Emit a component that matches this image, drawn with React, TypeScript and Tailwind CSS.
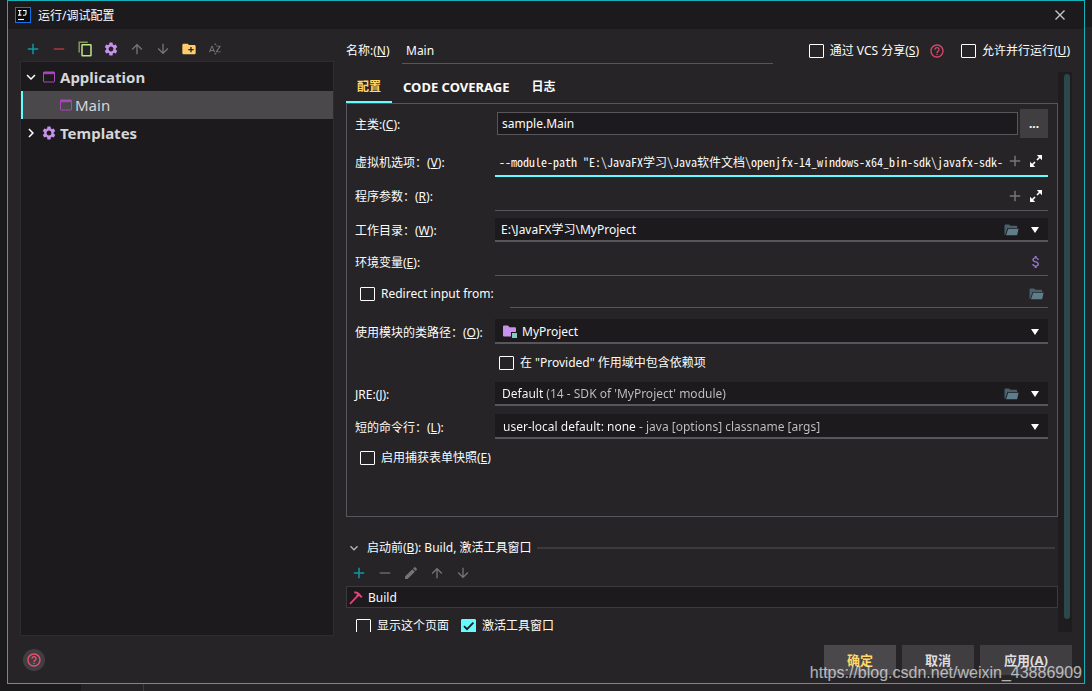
import { useState } from 'react';
import type { ReactNode } from 'react';
import {
  MdAdd,
  MdArrowDownward,
  MdArrowUpward,
  MdAttachMoney,
  MdCreateNewFolder,
  MdEdit,
  MdExpandMore,
  MdHelpOutline,
  MdRemove,
  MdSettings,
  MdSortByAlpha,
} from 'react-icons/md';

function IdeaLogo() {
  return (
    <svg viewBox="0 0 16 16" className="size-4 shrink-0">
      <rect x="0.5" y="0.5" width="15" height="15" fill="#0b0b0d" stroke="#1273eb" />
      <path d="M3 3.5h3.4M4.7 3.5v4.6M3 8.1h3.4M8 3.5h3v3.3q0 1.4-1.5 1.4H8" fill="none" stroke="#fff" strokeWidth="1.1" />
      <path d="M3 12.5h6" stroke="#fff" strokeWidth="1.1" />
    </svg>
  );
}

function CopyIcon() {
  return (
    <svg viewBox="0 0 14 16" className="h-4 w-3.5" fill="none">
      <path d="M1.2 11.5V1.2h8.6" stroke="#7d9a59" strokeWidth="1.5" />
      <rect x="4" y="3.8" width="9" height="11" rx="0.5" stroke="#bfe584" strokeWidth="1.5" />
    </svg>
  );
}

function WindowIcon() {
  return (
    <svg viewBox="0 0 12 12" className="size-3 shrink-0" fill="none">
      <rect x="0.5" y="1" width="11" height="10" rx="0.5" stroke="#ab47bc" />
      <path d="M0.5 1.5h11v1.2h-11z" fill="#ab47bc" stroke="#ab47bc" />
    </svg>
  );
}

function OpenFolderIcon() {
  return (
    <svg viewBox="0 0 15 12" className="h-3 w-[15px]">
      <path d="M0.5 1.5Q0.5 0.5 1.5 0.5H5l1.5 1.3h5.8q.9 0 .9 1V4H3.6L1 11.2q-.5-.2-.5-.9z" fill="#46606c" />
      <path d="M4.2 4.8h10.4l-1.3 5.6q-.2.9-1.1.9H2z" fill="#607d8b" />
    </svg>
  );
}

function ModuleIcon() {
  return (
    <svg viewBox="0 0 14 13" className="h-[13px] w-3.5">
      <path d="M0 1.5Q0 .5 1 .5h4l1.5 1.7H12q1 0 1 1V7H8v4.5H1q-1 0-1-1z" fill="#c792ea" />
      <path d="M9 8h5v5H9z" fill="#80cbc4" />
    </svg>
  );
}

function HammerIcon() {
  return (
    <svg viewBox="0 0 14 14" className="size-3.5" fill="none" stroke="#ec407a">
      <path d="M1 12.8 8.4 5.2" strokeWidth="1.7" />
      <path d="M5.3 1.6Q8 1 9.6 2.8l3.2 3.6" strokeWidth="2" />
      <path d="M8 5.4 9.8 3.4" strokeWidth="2.4" />
    </svg>
  );
}

function ExpandIcon() {
  return (
    <svg viewBox="0 0 12 12" className="size-3" fill="none" stroke="#fff" strokeWidth="1.6">
      <path d="M7 5l3.2-3.2M5 7l-3.2 3.2" />
      <path d="M6.8 0H12v5.2zM0 6.8V12h5.2z" fill="#fff" stroke="none" />
    </svg>
  );
}

function DropArrow() {
  return (
    <svg viewBox="0 0 8 6" className="h-1.5 w-2">
      <path d="M0 0h8L4 6z" fill="#fff" />
    </svg>
  );
}

function ToolButton({ label, children }: { label: string; children: ReactNode }) {
  return (
    <button type="button" aria-label={label} className="grid h-6 w-[26px] place-items-center">
      {children}
    </button>
  );
}

function CheckBox({ children, defaultChecked = false }: { children: ReactNode; defaultChecked?: boolean }) {
  return (
    <label className="flex h-5 shrink-0 items-center gap-1.5 whitespace-nowrap">
      <span className="grid">
        <input
          type="checkbox"
          defaultChecked={defaultChecked}
          className="peer col-start-1 row-start-1 h-3.5 w-[15px] appearance-none rounded-[1px] border border-white checked:border-[#64fcff] checked:bg-[#64fcff]"
        />
        <svg
          viewBox="0 0 15 14"
          className="pointer-events-none col-start-1 row-start-1 hidden h-3.5 w-[15px] peer-checked:block"
          fill="none"
          stroke="#1c1a1d"
          strokeWidth="1.8"
        >
          <path d="M3 7.2 6 10.2 12.4 3.6" />
        </svg>
      </span>
      <span>{children}</span>
    </label>
  );
}

function FieldLabel({ htmlFor, children }: { htmlFor: string; children: ReactNode }) {
  return (
    <label htmlFor={htmlFor} className="flex h-full w-[140px] shrink-0 items-center pt-0.5 whitespace-nowrap">
      {children}
    </label>
  );
}

const tabs = [
  { name: '配置', size: 'text-[12px]' },
  { name: 'CODE COVERAGE', size: 'text-[13px]' },
  { name: '日志', size: 'text-[12px]' },
];

function RunTree() {
  return (
    <aside className="flex w-[314px] shrink-0 flex-col pt-2">
      <div className="flex">
        <ToolButton label="Add"><MdAdd className="size-[18px] text-[#0f97a5]" /></ToolButton>
        <ToolButton label="Remove"><MdRemove className="size-[18px] text-[#a8393f]" /></ToolButton>
        <ToolButton label="Copy"><CopyIcon /></ToolButton>
        <ToolButton label="Edit templates"><MdSettings className="size-4 text-[#c792ea]" /></ToolButton>
        <ToolButton label="Move up"><MdArrowUpward className="size-4 text-[#757477]" /></ToolButton>
        <ToolButton label="Move down"><MdArrowDownward className="size-4 text-[#757477]" /></ToolButton>
        <ToolButton label="New folder"><MdCreateNewFolder className="size-4 text-[#ffcb6b]" /></ToolButton>
        <ToolButton label="Sort"><MdSortByAlpha className="size-3.5 text-[#757477]" /></ToolButton>
      </div>
      <ul className="flex-1 border border-[#2e2c2f] bg-[#1c1a1d] pt-px text-[15px] text-[#d6d5d7]">
        <li className="flex h-7 items-center pl-px font-bold">
          <MdExpandMore className="size-[18px] text-white" />
          <span className="ml-[3px] flex items-center gap-[5px]"><WindowIcon />Application</span>
        </li>
        <li className="flex h-7 items-center gap-[3px] border-l-2 border-[#64fcff] bg-[#4a484b] pl-[37px]">
          <WindowIcon />
          Main
        </li>
        <li className="flex h-7 items-center pl-px font-bold">
          <MdExpandMore className="size-[18px] -rotate-90 text-white" />
          <span className="ml-px flex items-center gap-[3px]"><MdSettings className="size-4 text-[#c792ea]" />Templates</span>
        </li>
      </ul>
    </aside>
  );
}

function ConfigurationPanel() {
  return (
    <div className="flex flex-col border border-[#58565a] pt-[5px] pr-[9px] pb-12 pl-2">
      <div className="flex h-[29px] items-center">
        <FieldLabel htmlFor="main-class">主类:(<u>C</u>):</FieldLabel>
        <input
          id="main-class"
          defaultValue="sample.Main"
          className="mx-0.5 h-[23px] min-w-0 flex-1 border border-[#58565a] bg-[#1c1a1d] px-1 outline-none"
        />
        <button type="button" className="h-[29px] w-7 bg-[#403e41] font-bold">...</button>
      </div>

      <div className="mt-[9px] flex h-[30px]">
        <FieldLabel htmlFor="vm-options">虚拟机选项：(<u>V</u>):</FieldLabel>
        <div className="flex min-w-0 flex-1 items-center border-b-2 border-[#64fcff] pr-1.5">
          <input
            id="vm-options"
            defaultValue={'--module-path "E:\\JavaFX学习\\Java软件文档\\openjfx-14_windows-x64_bin-sdk\\javafx-sdk-'}
            className="min-w-0 flex-1 pt-px pl-1 font-['Noto_Sans_Mono_CJK_SC','Liberation_Mono','Noto_Sans_CJK_SC',monospace] outline-none"
          />
          <button type="button" aria-label="Insert macro"><MdAdd className="size-[18px] text-[#757477]" /></button>
          <button type="button" aria-label="Expand" className="ml-1.5"><ExpandIcon /></button>
        </div>
      </div>

      <div className="mt-1 flex h-[30px]">
        <FieldLabel htmlFor="arguments">程序参数：(<u>R</u>):</FieldLabel>
        <div className="flex min-w-0 flex-1 items-center border-b border-[#58565a] pr-1.5">
          <input id="arguments" className="min-w-0 flex-1 px-1 outline-none" />
          <button type="button" aria-label="Insert macro"><MdAdd className="size-[18px] text-[#757477]" /></button>
          <button type="button" aria-label="Expand" className="ml-1.5"><ExpandIcon /></button>
        </div>
      </div>

      <div className="mt-[7px] flex h-6 items-center">
        <FieldLabel htmlFor="work-dir">工作目录：(<u>W</u>):</FieldLabel>
        <div className="flex h-full min-w-0 flex-1 items-center border-b-2 border-[#58565a] bg-[#1c1a1d] pt-px pr-[9px]">
          <input id="work-dir" defaultValue="E:\JavaFX学习\MyProject" className="min-w-0 flex-1 px-1.5 outline-none" />
          <button type="button" aria-label="Browse"><OpenFolderIcon /></button>
          <button type="button" aria-label="History" className="ml-3"><DropArrow /></button>
        </div>
      </div>

      <div className="mt-1.5 flex h-7">
        <FieldLabel htmlFor="env">环境变量(<u>E</u>):</FieldLabel>
        <div className="flex min-w-0 flex-1 items-center border-b border-[#58565a] pr-1">
          <input id="env" className="min-w-0 flex-1 px-1 outline-none" />
          <button type="button" aria-label="Edit variables"><MdAttachMoney className="size-4 text-[#9575cd]" /></button>
        </div>
      </div>

      <div className="mt-1 flex h-7 items-center pl-[5px]">
        <CheckBox>Redirect input from:</CheckBox>
        <div className="ml-4 flex h-full min-w-0 flex-1 items-center border-b border-[#58565a] pr-1">
          <input aria-label="Redirect input from" className="min-w-0 flex-1 px-1 outline-none" />
          <button type="button" aria-label="Browse"><OpenFolderIcon /></button>
        </div>
      </div>

      <div className="mt-[11px] flex h-[25px] items-center">
        <FieldLabel htmlFor="module">使用模块的类路径：(<u>O</u>):</FieldLabel>
        <div className="flex h-full min-w-0 flex-1 items-center border-b-2 border-[#58565a] bg-[#1c1a1d] pt-0.5 pr-[9px] pl-2">
          <ModuleIcon />
          <select id="module" className="min-w-0 flex-1 appearance-none bg-transparent pl-[5px] outline-none">
            <option>MyProject</option>
          </select>
          <DropArrow />
        </div>
      </div>

      <div className="mt-[9px] pl-36">
        <CheckBox>在 "Provided" 作用域中包含依赖项</CheckBox>
      </div>

      <div className="mt-[9px] flex h-6 items-center">
        <FieldLabel htmlFor="jre">JRE:(<u>J</u>):</FieldLabel>
        <div className="flex h-full min-w-0 flex-1 items-center border-b-2 border-[#58565a] bg-[#1c1a1d] pt-0.5 pr-[9px]">
          <select
            id="jre"
            className="min-w-0 flex-1 appearance-none bg-linear-to-r from-white from-[50px] to-[#c3c2c4] to-[50px] bg-clip-text pl-[7px] text-transparent outline-none"
          >
            <option>Default (14 - SDK of 'MyProject' module)</option>
          </select>
          <button type="button" aria-label="Browse"><OpenFolderIcon /></button>
          <span className="ml-3"><DropArrow /></span>
        </div>
      </div>

      <div className="mt-2 flex h-[25px] items-center">
        <FieldLabel htmlFor="short-cmd">短的命令行：(<u>L</u>):</FieldLabel>
        <div className="flex h-full min-w-0 flex-1 items-center border-b-2 border-[#58565a] bg-[#1c1a1d] pt-0.5 pr-[9px]">
          <select
            id="short-cmd"
            className="min-w-0 flex-1 appearance-none bg-linear-to-r from-white from-[142px] to-[#c3c2c4] to-[142px] bg-clip-text pl-2 text-transparent outline-none"
          >
            <option>user-local default: none - java [options] classname [args]</option>
          </select>
          <DropArrow />
        </div>
      </div>

      <div className="mt-[9px] pl-[5px]">
        <CheckBox>启用捕获表单快照(<u>E</u>)</CheckBox>
      </div>
    </div>
  );
}

function BeforeLaunch() {
  return (
    <section>
      <h2 className="mt-[21px] flex h-5 items-center pr-[3px]">
        <MdExpandMore className="size-4 text-[#b5b4b6]" />
        <span className="ml-[5px]">启动前(<u>B</u>): Build, 激活工具窗口</span>
        <span className="ml-1.5 h-0.5 flex-1 bg-[#3c3a3d]" />
      </h2>
      <div className="mt-[3px] flex">
        <ToolButton label="Add task"><MdAdd className="size-[18px] text-[#0f97a5]" /></ToolButton>
        <ToolButton label="Remove task"><MdRemove className="size-[18px] text-[#67666a]" /></ToolButton>
        <ToolButton label="Edit task"><MdEdit className="size-4 text-[#757477]" /></ToolButton>
        <ToolButton label="Move task up"><MdArrowUpward className="size-4 text-[#757477]" /></ToolButton>
        <ToolButton label="Move task down"><MdArrowDownward className="size-4 text-[#757477]" /></ToolButton>
      </div>
      <ul className="mt-px border border-[#3c3a3d] bg-[#1c1a1d]">
        <li className="flex h-5 items-center gap-[5px] pt-px pl-0.5"><HammerIcon />Build</li>
      </ul>
      <div className="mt-2 flex gap-3 pl-2.5">
        <CheckBox>显示这个页面</CheckBox>
        <CheckBox defaultChecked>激活工具窗口</CheckBox>
      </div>
    </section>
  );
}

export default function App() {
  const [activeTab, setActiveTab] = useState('配置');

  return (
    <main className="relative flex h-screen flex-col overflow-hidden bg-[#1a191b] font-['Noto_Sans','Noto_Sans_CJK_SC',sans-serif] text-[12px] leading-4 text-[#fcfcfa]">
      <div className="flex min-h-0 flex-1">
        <div className="w-[7px] shrink-0" />
        <div className="flex min-w-0 flex-1 flex-col border border-[#15b0ba] bg-[#262427]">
          <header className="flex h-7 shrink-0 items-center bg-[#1c1a1d] pl-[7px]">
            <IdeaLogo />
            <h1 className="ml-[7px] flex-1 pt-px">运行/调试配置</h1>
            <button type="button" aria-label="Close" className="mr-[18px]">
              <svg viewBox="0 0 12 12" className="size-3" fill="none" stroke="#c5c8ca" strokeWidth="1.4">
                <path d="M1.5 1.5l9 9M10.5 1.5l-9 9" />
              </svg>
            </button>
          </header>

          <div className="flex min-h-0 flex-1 pl-3">
            <RunTree />
            <div className="mr-3 ml-3 flex min-w-0 flex-1 flex-col">
              <div className="flex h-[43px] shrink-0 items-center">
                <label htmlFor="name" className="w-14 shrink-0">名称:(<u>N</u>)</label>
                <input
                  id="name"
                  defaultValue="Main"
                  className="mb-0.5 h-7 min-w-0 flex-1 border-b border-[#58565a] px-1 pt-0.5 outline-none"
                />
                <div className="mr-0.5 ml-9 flex items-center">
                  <CheckBox>通过 VCS 分享(<u>S</u>)</CheckBox>
                  <button type="button" aria-label="Help on sharing" className="mx-2.5">
                    <MdHelpOutline className="size-4 text-[#d9486a]" />
                  </button>
                  <span className="ml-1.5"><CheckBox>允许并行运行(<u>U</u>)</CheckBox></span>
                </div>
              </div>

              <div className="mb-1 flex min-h-0 flex-1 overflow-hidden">
                <div className="min-w-0 flex-1">
                  <div role="tablist" className="flex h-[31px]">
                    {tabs.map((tab) => (
                      <button
                        key={tab.name}
                        type="button"
                        role="tab"
                        aria-selected={tab.name === activeTab}
                        onClick={() => setActiveTab(tab.name)}
                        className={`border-b-2 px-[11px] pt-px font-bold ${tab.size} ${
                          tab.name === activeTab ? 'border-[#64fcff] text-[#ffd866]' : 'border-transparent'
                        }`}
                      >
                        {tab.name}
                      </button>
                    ))}
                  </div>
                  <ConfigurationPanel />
                  <BeforeLaunch />
                </div>
                <div className="w-3.5 shrink-0 bg-[#1e1c1f] pt-0.5 pr-0.5 pb-[13px] pl-1.5">
                  <div className="h-full rounded-full bg-[#2d484b]" />
                </div>
              </div>
            </div>
          </div>

          <footer className="flex h-[47px] shrink-0 items-center gap-1.5 pt-px pr-3 pl-[15px] text-[13px] font-bold">
            <button type="button" aria-label="Help" className="mr-auto grid size-[22px] place-items-center rounded-full bg-[#403e41]">
              <MdHelpOutline className="size-4 text-[#ef4f73]" />
            </button>
            <button type="button" className="h-[30px] w-[72px] bg-[#4a484b] text-[#ffd866]">确定</button>
            <button type="button" className="h-[30px] w-[72px] bg-[#403e41] text-[#dddcde]">取消</button>
            <button type="button" className="h-[30px] w-[92px] bg-[#403e41] text-[#dddcde]">应用(<u>A</u>)</button>
          </footer>
        </div>
        <div className="flex w-[7px] shrink-0 flex-col bg-[#252326]">
          <div className="h-[27px] bg-[#1a191b]" />
        </div>
      </div>
      <div className="flex h-[7px] shrink-0 bg-[#252326]">
        <div className="w-[81px] bg-[#1a191b]" />
        <div className="w-[63px] border-r border-[#3c3a3d]" />
      </div>
      <p className="pointer-events-none absolute right-2.5 bottom-2 font-['Liberation_Sans',sans-serif] text-[16px] leading-5 text-white/65">
        https://blog.csdn.net/weixin_43886909
      </p>
    </main>
  );
}
